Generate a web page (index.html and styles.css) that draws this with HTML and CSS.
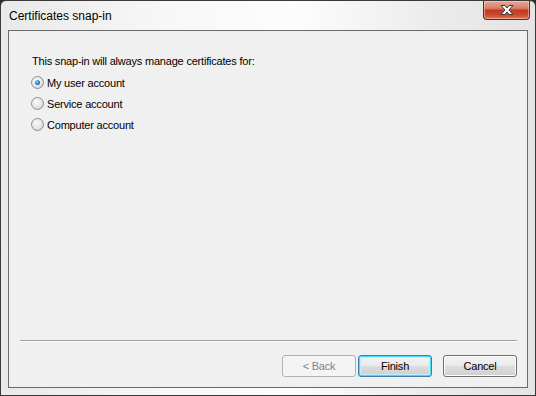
FILE: index.html
```html
<!DOCTYPE html>
<html lang="en">
<head>
    <meta charset="UTF-8">
    <title>Certificates snap-in</title>
    <link rel="stylesheet" href="styles.css">
</head>
<body>
    <div class="window">
        <div class="titlebar">
            <span class="title">Certificates snap-in</span>
            <div class="close-btn">
                <svg width="18" height="12" viewBox="0 0 18 12">
                    <path d="M3 1.5 L7 1.5 L9 4 L11 1.5 L15 1.5 L11 6 L15 10.5 L11 10.5 L9 8 L7 10.5 L3 10.5 L7 6 Z" fill="#fff" stroke="#3a3a3a" stroke-width="1" stroke-linejoin="round"/>
                </svg>
            </div>
        </div>

        <div class="client">
            <div class="content">
                <p class="prompt">This snap-in will always manage certificates for:</p>
                <label class="radio-row"><span class="radio checked"></span>My user account</label>
                <label class="radio-row"><span class="radio"></span>Service account</label>
                <label class="radio-row"><span class="radio"></span>Computer account</label>
            </div>

            <div class="separator"></div>

            <div class="button-row">
                <div class="btn-pair">
                    <button class="btn disabled">&lt; Back</button>
                    <button class="btn default">Finish</button>
                </div>
                <button class="btn">Cancel</button>
            </div>
        </div>
    </div>
</body>
</html>
```

FILE: styles.css
```css
body {
    margin: 0;
    background: #2a2a2a;
    font-family: 'Liberation Sans', Arial, sans-serif;
    font-size: 11px;
    letter-spacing: -0.2px;
    color: #000;
}
.window {
    width: 534px;
    height: 394px;
    border: 1px solid #3a3a3a;
    border-radius: 6px 6px 0 0;
    background: linear-gradient(to right, #e9e9e9 0%, #f7f7f7 30%, #fdfdfd 55%, #ececec 80%, #e4e4e4 100%);
    display: flex;
    flex-direction: column;
}
.titlebar {
    height: 29px;
    display: flex;
    justify-content: space-between;
    align-items: flex-start;
    padding: 0 5px 0 8px;
}
.title {
    margin-top: 8px;
    font-size: 12px;
    letter-spacing: 0;
    color: #000;
}
.close-btn {
    width: 45px;
    height: 18px;
    border: 1px solid #5b2a22;
    border-top: none;
    border-radius: 0 0 4px 4px;
    background: linear-gradient(to bottom, #e8a898 0%, #d9806a 40%, #c23b22 52%, #c9472b 75%, #de7658 100%);
    box-shadow: inset 0 0 0 1px rgba(255, 220, 210, 0.5);
    display: flex;
    align-items: center;
    justify-content: center;
}
.client {
    flex: 1;
    margin: 0 7px 7px 7px;
    border: 1px solid #6a6a6a;
    background: #f0f0f0;
    display: flex;
    flex-direction: column;
}
.content {
    flex: 1;
    padding: 23px 0 0 22px;
}
.prompt {
    margin: 0 0 3px 1px;
    line-height: 15px;
}
.radio-row {
    display: flex;
    align-items: center;
    height: 21px;
    gap: 3px;
}
.radio {
    width: 11px;
    height: 11px;
    border-radius: 50%;
    border: 1px solid #8f8f8f;
    background: radial-gradient(circle at 40% 35%, #fbfbfb 0%, #e4e4e4 55%, #c8c8c8 100%);
    position: relative;
}
.radio.checked::after {
    content: "";
    position: absolute;
    left: 3px;
    top: 3px;
    width: 5px;
    height: 5px;
    border-radius: 50%;
    background: radial-gradient(circle at 40% 35%, #8fd0f2 0%, #2a7cb8 55%, #1a4f82 100%);
}
.separator {
    margin: 0 10px 0 11px;
    height: 1px;
    background: #a0a0a0;
    border-bottom: 1px solid #fff;
}
.button-row {
    display: flex;
    justify-content: flex-end;
    gap: 11px;
    padding: 13px 10px 10px 0;
}
.btn-pair {
    display: flex;
    gap: 2px;
}
.btn {
    width: 74px;
    height: 22px;
    padding: 0;
    font-family: 'Liberation Sans', Arial, sans-serif;
    font-size: 11px;
    letter-spacing: -0.2px;
    color: #000;
    border: 1px solid #707070;
    border-radius: 3px;
    background: linear-gradient(to bottom, #f2f2f2 0%, #ebebeb 50%, #dddddd 51%, #cfcfcf 100%);
    box-shadow: inset 0 0 0 1px #fcfcfc;
}
.btn.default {
    border-color: #3c7fb1;
    box-shadow: inset 0 0 0 1px #48d8fb, inset 0 0 0 2px #c6ecfa;
}
.btn.disabled {
    border-color: #adb2b5;
    background: #f4f4f4;
    color: #838383;
    box-shadow: none;
}
```
